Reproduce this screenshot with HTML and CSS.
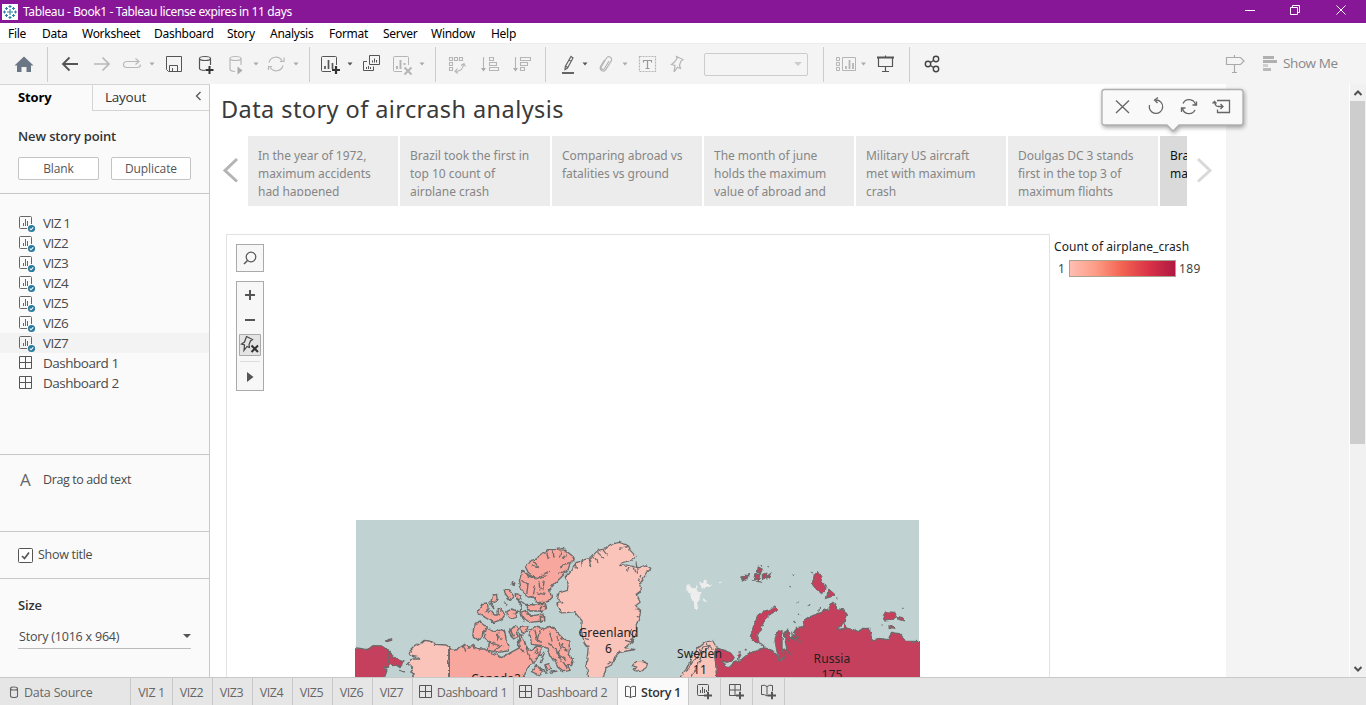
FILE: index.html
```html
<!DOCTYPE html>
<html lang="en">
<head>
<meta charset="utf-8">
<title>Tableau - Book1</title>
<link rel="stylesheet" href="styles.css">
</head>
<body>
<svg width="0" height="0" class="defs">
  <defs>
    <symbol id="sheet" viewBox="0 0 17 17"><path d="M8 12.500H1.500q-1 0-1-1V1.500q0-1 1-1H11.500q1 0 1 1V8M4.500 10V7M6.500 10V3M8.500 10V5" fill="none" stroke="#666"/><circle cx="12.500" cy="12.500" r="3.600" fill="#2b7a9e"/><path d="M10.800 12.500l1.200 1.300 2.300-2.500" fill="none" stroke="#fff" stroke-width="1.100"/></symbol>
    <symbol id="dash" viewBox="0 0 14 14"><path d="M.5.5h12v12H.5zM6.500.500v12M.5 6.500h12" fill="none" stroke="#555"/></symbol>
    <symbol id="book" viewBox="0 0 12 14"><path d="M5.500 2.500v10M.5 1.500q3-1 5 1 2-2 5-1v10q-3-.5-5 1-2-1.500-5-1z" fill="none" stroke="#555"/></symbol>
    <symbol id="plus" viewBox="0 0 8 8"><path d="M4 0v8M0 4h8" stroke="#555" stroke-width="2"/></symbol>
  </defs>
</svg>
<div class="app">
  <header class="titlebar">
    <svg class="logo" width="16" height="16" viewBox="0 0 16 16"><path fill="#fff" d="M0 0h16v16H0z"/><path d="M8 5v6M5 8h6M8 1v3M6.500 2.500h3M8 12v3M6.500 13.500h3M1 8h3M2.500 6.500v3M12 8h3M13.500 6.500v3M4.500 3v3M3 4.500h3M11.500 3v3M10 4.500h3M4.500 10v3M3 11.500h3M11.500 10v3M10 11.500h3" stroke="#2f7fa8" stroke-width="1.100"/></svg>
    <span class="apptitle">Tableau - Book1 - Tableau license expires in 11 days</span>
    <svg width="126" height="23" viewBox="1240 0 126 23" fill="none" stroke="#fff"><path d="M1245 10.500h10M1290.500 7.500h7v7h-7zM1292.500 7.500v-2h7v7h-2M1336.500 5.500l9 9M1345.500 5.500l-9 9"/></svg>
  </header>
  <nav class="menu">
    <span class="m34">File</span><span class="m40">Data</span><span class="m72">Worksheet</span><span class="m73">Dashboard</span><span class="m43">Story</span><span class="m59">Analysis</span><span class="m54">Format</span><span class="m48">Server</span><span class="m60">Window</span><span>Help</span>
  </nav>
  <div class="toolbar">
    <svg width="48" height="40" viewBox="0 44 48 40"><path d="M14.500 65.500L24 56.500l9.500 9H31V72h-4.500v-5h-5v5H17v-6.500z" fill="#6b7684"/><path d="M47.500 47v35" stroke="#ccc"/></svg>
    <svg width="262" height="40" viewBox="48 44 262 40" fill="none" stroke="#b8b8b8" stroke-width="1.200">
      <path d="M63 64h15M69.500 57.500L63 64l6.500 6.500" stroke="#555" stroke-width="1.900"/>
      <path d="M94 64h15M102.500 57.500L109 64l-6.500 6.500" stroke-width="1.700"/>
      <path d="M132 67.500h-5q-3.500 0-3.500-3t3.500-3h11M132 67.500h5q3.500 0 3.500-3M135.500 58.500l3.500 3-3.500 3"/>
      <path d="M149.500 62.500h5l-2.500 3zM253.500 62.500h5l-2.500 3zM293.500 62.500h5l-2.500 3z" fill="#aaa" stroke="none"/>
      <path d="M166.500 56.500h15v15h-13l-2-2zM169.500 71.500v-6h8v6M172.500 71v-3" stroke="#555" stroke-width="1"/>
      <path d="M205 70.500q-5.500-.3-5.500-2v-10q0-2 5.500-2t5.500 2v6.500M199.500 58.500q0 2 5.500 2t5.500-2" stroke="#555"/><path d="M209.500 66v8M205.500 70h8" stroke="#333" stroke-width="2"/>
      <path d="M235 71.500q-5-.3-5-2.500V58.500q0-2 5.500-2t5.500 2V65M230 58.500q0 2 5.500 2t5.500-2"/><path d="M237.500 66.500l5 4-5 4z" fill="#aaa" stroke="none"/>
      <path d="M269 62.500a7 7 0 0 1 13-1.500M283 65.500a7 7 0 0 1-13 1.500M280 61.500h4v-4M272 66.500h-3.500v3.500"/>
      <path d="M309.500 47v35" stroke="#ccc" stroke-width="1"/>
    </svg>
    <svg width="126" height="40" viewBox="310 44 126 40" fill="none" stroke="#555" stroke-width="1">
      <path d="M331 71.500h-8.500q-1 0-1-1v-13q0-1 1-1h13q1 0 1 1V65"/><path d="M325 69v-3M328.500 69v-9M332.500 69v-6" stroke-width="1.700"/><path d="M336 66v8M332 70h8" stroke="#333" stroke-width="2.200"/>
      <path d="M347.500 62.500h5l-2.500 3z" fill="#555" stroke="none"/>
      <path d="M369.500 55.500h10v9h-10zM367 61.500h-3.500v9h10v-4M372.500 62.500v-2M374.500 62.500v-4M376.500 62.500v-2.500M366.500 69v-2M368.500 69v-3M370.500 69v-2"/>
      <g stroke="#b5b5b5"><path d="M402 71.500h-7.500q-1 0-1-1v-13q0-1 1-1h13q1 0 1 1V65"/><path d="M397 69v-3M400.500 69v-9M404.500 65v-2M404.500 67.500l7 7M411.500 67.500l-7 7" stroke-width="2"/></g>
      <path d="M419.500 62.500h5l-2.500 3z" fill="#aaa" stroke="none"/><path d="M435.500 47v35" stroke="#ccc"/>
    </svg>
    <svg width="110" height="40" viewBox="436 44 110 40" fill="none" stroke="#b5b5b5" stroke-width="1.100">
      <path d="M449.500 57.500h3v3h-3zM454.500 57.500h3v3h-3zM459.500 57.500h3v3h-3zM449.500 62.500h3v3h-3zM449.500 67.500h3v3h-3zM456 71.500q7-1 7.500-7M461 65.500l3-2 1.500 3M457.500 68.500l-2.500 3 3 2"/>
      <path d="M483.500 57v12M489.500 57.500h4v3h-4zM489.500 62.500h7v3h-7zM489.500 67.500h9v3h-9z"/><path d="M481 68h5l-2.500 3.500zM513 68h5l-2.500 3.500z" fill="#aaa" stroke="none"/>
      <path d="M515.500 57v12M520.500 57.500h10v3h-10zM520.500 62.500h7v3h-7zM520.500 67.500h4v3h-4z"/>
      <path d="M545.500 47v35" stroke="#ccc" stroke-width="1"/>
    </svg>
    <svg width="158" height="40" viewBox="546 44 158 40" fill="none" stroke="#b5b5b5" stroke-width="1.200">
      <path d="M571 56.500l2 1.500-5.500 10-2.500 1.500.3-3zM565.500 66l2.500 1.700M569 60l2.500 1.500" stroke="#666"/><path d="M562 73h12" stroke="#555" stroke-width="1.800"/>
      <path d="M582.500 62.500h5l-2.500 3z" fill="#555" stroke="none"/><path d="M622.500 62.500h5l-2.500 3z" fill="#aaa" stroke="none"/>
      <path d="M609 61l-4.500 7.500q-1 1.500-2.500.5t-.5-2.500l5-8.500q1.500-2 3.500-1t1.500 3.500l-6 9.500q-2 2-4 .5t-1-4l4-6.500"/>
      <path d="M639.500 56.500h16v15h-16z" stroke-dasharray="2 1"/><path d="M643.500 62.500v-2h8v2M647.500 60.500v8M645.500 68.500h4" stroke="#999"/>
      <path d="M676.500 56.500l6.500 3-2 1.500-1.500 4 1 3.500-3-1.200-3.500 4.700 1-6.500-3.500-1 3-2.500 2.500-3.500z"/>
    </svg>
    <div class="combo"><i class="caret light"></i></div>
    <svg width="142" height="40" viewBox="808 44 142 40" fill="none" stroke="#b5b5b5" stroke-width="1">
      <path d="M823.500 47v35M909.500 47v35" stroke="#ccc"/>
      <path d="M836.500 57.500h3v3h-3zM836.500 62.500h3v3h-3zM836.500 67.500h3v3h-3zM842.500 57.500h13v13h-13z"/><path d="M846 69v-3M849.500 69v-9M853 69v-6" stroke-width="1.800"/><path d="M861 62.500h5l-2.500 3z" fill="#aaa" stroke="none"/>
      <path d="M877 57.500h17" stroke="#555" stroke-width="2"/><path d="M878.500 58v8.500h14V58M885.500 55.500v2M885.500 66.500v5M882 71.500h7" stroke="#555" stroke-width="1.200"/>
      <g stroke="#444" stroke-width="1.400"><circle cx="928" cy="64" r="2.700"/><circle cx="936" cy="59" r="2.700"/><circle cx="936" cy="69" r="2.700"/><path d="M930.500 62.500l3-2M930.500 65.500l3 2"/></g>
    </svg>
    <svg class="push" width="62" height="40" viewBox="1221 44 62 40"><path d="M1226.500 57.500h14l3.500 3.500-3.500 3.500h-14zM1234.500 55v2.500M1234.500 64.500v8M1232 72.500h5" fill="none" stroke="#aaa" stroke-width="1.200"/><path d="M1263 56h11v3h-11zM1263 60h14v3h-14z" fill="#b0b0b0"/><path d="M1263 64h5v3h-5z" fill="#d0d0d0"/><path d="M1263 68h8v3h-8z" fill="#b9b9b9"/></svg>
    <span class="showme">Show Me</span>
  </div>

  <main class="body">
    <aside class="side">
      <div class="sidetabs"><b>Story</b><div class="laytab"><span>Layout</span><svg width="8" height="12" viewBox="0 0 8 12"><path d="M5.500 1L1.500 5 5.500 9" fill="none" stroke="#555" stroke-width="1.300"/></svg></div></div>
      <section class="newpt"><h3>New story point</h3><div class="btns"><button>Blank</button><button>Duplicate</button></div></section>
      <section class="list">
        <div class="row"><svg width="17" height="17"><use href="#sheet"/></svg><span>VIZ 1</span></div>
        <div class="row"><svg width="17" height="17"><use href="#sheet"/></svg><span>VIZ2</span></div>
        <div class="row"><svg width="17" height="17"><use href="#sheet"/></svg><span>VIZ3</span></div>
        <div class="row"><svg width="17" height="17"><use href="#sheet"/></svg><span>VIZ4</span></div>
        <div class="row"><svg width="17" height="17"><use href="#sheet"/></svg><span>VIZ5</span></div>
        <div class="row"><svg width="17" height="17"><use href="#sheet"/></svg><span>VIZ6</span></div>
        <div class="row hot"><svg width="17" height="17"><use href="#sheet"/></svg><span>VIZ7</span></div>
        <div class="row dashrow"><svg width="14" height="14"><use href="#dash"/></svg><span>Dashboard 1</span></div>
        <div class="row dashrow"><svg width="14" height="14"><use href="#dash"/></svg><span>Dashboard 2</span></div>
      </section>
      <section class="drag"><span class="bigA">A</span><span>Drag to add text</span></section>
      <section class="show"><svg width="15" height="15" viewBox="0 0 15 15"><rect x=".5" y=".5" width="14" height="14" rx="1" fill="#fff" stroke="#555"/><path d="M4 8l2.500 2.500L11 4.500" fill="none" stroke="#555" stroke-width="1.700"/></svg><span>Show title</span></section>
      <section class="size"><h3>Size</h3><div class="sel"><span>Story (1016 x 964)</span><i class="caret"></i></div></section>
    </aside>

    <div class="story">
      <h1>Data story of aircrash analysis</h1>
      <div class="nav">
        <svg width="38" height="70" viewBox="210 136 38 70"><path d="M237 159L225 170.500l12 11" fill="none" stroke="#b4b4b4" stroke-width="3"/></svg>
        <div class="points">
          <div class="pt"><p>In the year of 1972,<br>maximum accidents<br>had happened</p></div>
          <div class="pt"><p>Brazil took the first in<br>top 10 count of<br>airplane crash</p></div>
          <div class="pt"><p>Comparing abroad vs<br>fatalities vs ground</p></div>
          <div class="pt"><p>The month of june<br>holds the maximum<br>value of abroad and</p></div>
          <div class="pt"><p>Military US aircraft<br>met with maximum<br>crash</p></div>
          <div class="pt"><p>Doulgas DC 3 stands<br>first in the top 3 of<br>maximum flights</p></div>
          <div class="pt on"><p>Bra<br>ma</p></div>
        </div>
        <svg width="39" height="70" viewBox="1187 136 39 70"><path d="M1198 159l12 11.500-12 11" fill="none" stroke="#d9d9d9" stroke-width="3"/></svg>
      </div>
      <div class="content">
        <div class="viz">
          <div class="ctl one"><svg width="26" height="26" viewBox="0 0 26 26"><circle cx="14" cy="12" r="4.800" fill="none" stroke="#555" stroke-width="1.200"/><path d="M10.500 15.500l-3.500 3.500" stroke="#555" stroke-width="1.500"/></svg></div>
          <div class="ctl many">
            <svg width="26" height="108" viewBox="237 282 26 108"><path d="M245 295h10M250 290v10M245 320h10" stroke="#555" stroke-width="2"/><path d="M239.500 334.500h21v21h-21z" fill="#e4e4e4" stroke="#aaa"/><path d="M246.500 336.500l6 3-2 1.500-1.500 3.500.5 3-2.500-1-3 4 .5-5.500-3-1 3-2z" fill="none" stroke="#444" stroke-width="1.200"/><path d="M251.500 345.500l6.500 6.500M258 345.500l-6.500 6.500" stroke="#333" stroke-width="2"/><path d="M240 361.500h20" stroke="#ddd"/><path d="M247 372l6.500 5-6.500 5z" fill="#555"/></svg>
          </div>
          <svg class="map" width="566" height="157" viewBox="355 520 566 157">
            <defs><filter id="coast" x="-5%" y="-5%" width="110%" height="110%"><feTurbulence type="fractalNoise" baseFrequency=".22" numOctaves="2" seed="4"/><feDisplacementMap in="SourceGraphic" scale="3.500" xChannelSelector="R" yChannelSelector="G"/></filter></defs>
            <path d="M356 520h563v157H356z" fill="#c1d2d2"/>
            <g filter="url(#coast)">
            <g transform="translate(349.500 515) scale(.33333)" stroke="#6b6b6b" stroke-width="4" stroke-linejoin="round">
              <g fill="#c43f5b"><path d="M0 376L20 398 52 404 60 400 70 392 100 393 117 405 117 456 104 458 112 468 100 500H0z"/><path d="M117 408L132 422 140 432 160 440 152 458 140 450 130 452 117 446zM108 378L118 370 127 375 112 380zM152 466l14 5"/></g>
              <path fill="#fac4ba" d="M298 396L290 390 258 388 240 378 224 376 212 386 196 394 178 412 182 420 206 425 208 432 190 432 174 446 190 460 184 468 194 480 180 500H298z"/>
              <g fill="#f8a79e">
                <path d="M298 396L306 404 315 406 334 396 346 388 356 400 372 388 378 398 392 402 406 402 416 410 440 418 456 428 470 420 500 404 510 398 512 390 506 374 516 360 524 376 530 398 548 408 560 392 574 396 576 420 560 430 552 446 540 452 528 470 516 500H298z"/>
                <path d="M374 325L394 321 414 336 400 350 398 368 386 376 370 362zM404 352L420 340 438 350 456 344 466 350 470 376 478 392 476 408 446 412 416 406 420 380 406 368z"/>
                <path d="M384 292L398 266 414 264 416 280 408 290 424 288 434 300 446 300 446 280 454 280 466 300 456 314 432 322 408 308zM430 240L444 238 446 252 436 262 424 260zM464 224L478 222 494 246 480 256 468 240zM500 236L514 240 514 254 502 252zM472 290L486 282 500 286 502 306 488 312 474 302zM488 200l8 4-2 8-6-4zM464 260l6 10"/>
                <path d="M512 292L530 286 544 304 580 296 586 306 580 318 540 322 526 312zM528 268L560 270 586 262 592 280 578 288 540 288zM478 350L496 332 510 340 500 350 506 364 492 372zM512 334L536 332 530 350 518 356z"/>
                <path d="M528 156L546 136 562 132 570 120 586 112 594 104 618 104 640 100 668 122 674 134 662 146 654 168 632 190 612 210 600 224 606 246 592 262 566 262 550 244 534 248 514 220 510 196 518 166 534 182 560 192 536 172z"/>
                <path d="M572 276L584 270 590 284 576 290zM572 304L584 302 586 314 574 322z"/>
                <path d="M540 348L556 335 584 342 600 334 614 338 622 352 640 370 658 378 660 402 656 422 672 434 666 452 654 450 662 466 640 470 624 456 616 434 600 422 596 400 580 392 546 388z"/>
                <path d="M546 470L560 450 580 470 568 480zM586 450L598 446 606 460 592 468zM556 410l14 12-10 10"/>
              </g>
              <path fill="none" d="M530 174L546 186 564 190 578 184 596 182M592 112l4 20M610 106l4 22M636 104l-6 24M652 116l-12 16M546 152l18 6M554 140l14 18M568 200l4 26M584 196l-4 30M516 196l18 14M536 204l-4 30M556 214l-4 24M660 142l-28 14M648 168l-22 8M600 168l-24 12M564 234l24 4M502 250l14 20-4 20-20 6M516 300l8 20M500 284l14 12M530 296l20 6M508 350l6 30M526 380l10 40 20 30M440 360l20 14M424 384l26 8M448 350l-4 24M458 392l-22 12M340 392l10 16M370 392l6 12M556 344l6 26M572 346l-10 30 18 6M600 350l8 30M622 366l12 30 20 10M596 384l24 20 16 36M640 384l-12 34M562 400l12 26M586 410l-14 34M570 456l24 20M600 472l24-4M420 262l14 20M506 256l20 10M480 340l12 24M514 366l-10 24 20 24M628 420l28 18M640 440l14 20"/>
            </g>
            <g transform="translate(539.500 515) scale(.33333)" stroke="#6b6b6b" stroke-width="3.600" stroke-linejoin="round">
              <path fill="#fac4ba" d="M77 186L100 160 110 142 135 134 152 130 160 122 175 106 194 102 214 88 240 82 258 88 268 94 272 106 290 124 280 134 245 144 238 152 262 150 286 156 300 158 318 150 334 160 318 180 300 208 306 226 290 238 302 262 288 272 304 286 300 306 290 330 292 352 272 384 256 398 286 404 240 412 226 426 216 450 200 458 188 500H150L140 452 146 400 134 382 126 350 128 318 104 290 86 292 66 294 52 264 70 264 54 250 58 234 84 226 86 206zM278 452L290 440 310 440 324 446 320 458 300 470 284 466 292 456zM412 500L440 462 455 430 475 400 500 380 520 378 530 396 525 420 528 440 536 500z"/>
              <path fill="none" d="M107 146l4 14M126 138l2 18M148 130l6 26M162 122l14 22M174 112l20 18M190 104l14 18M238 100l30-6M268 158l-4 12M280 152l6 22M290 142l4 34M304 180l-8 20M290 240l14-10M288 282l16 8M292 306l10-6M268 350l16 16-8 20M256 376l24 6M276 342l-6 14M136 370l12 4M136 392l14 2M216 440l-12 8M440 470l20-30 20-20 10-24 24-6M456 430l-4 20M480 402l4 14M500 384l6 20M510 392l-22 24-12 32-26 52M508 392l14 12"/>
              <path fill="#eee" stroke="none" d="M441 210l10-2 4 10 14 2 2-12 4 22 12 2-8 12 2 12-8 12-2 14-6 0-2-24-8-8-2-10-12-8zM478 204l12 0 4-10 8 2-2 10 14 2-4 8-12 2-10 8-2-12zM488 246l10 6 4 12-12-8zM540 198h6v4h-6z"/>
            </g>
            <g transform="translate(729.500 515) scale(.33333)" stroke="#6b6b6b" stroke-width="3.600" stroke-linejoin="round" fill="#c43f5b">
              <path d="M-38 500L-42 440-44 410-36 400-20 404 4 414 14 428 8 438-8 442-22 438-14 452 4 456 16 440 36 434 56 416 80 408 104 398 128 406 142 420 150 438 164 432 162 406 172 404 168 382 164 352 176 346 180 370 196 360 206 380 194 350 200 338 226 334 220 322 240 306 272 292 296 282 306 262 318 266 322 280 344 286 354 300 344 322 320 346 348 338 366 342 388 350 400 340 420 340 428 376 444 370 476 374 486 352 510 356 530 378 590 380V500z"/>
              <path stroke-width="3" d="M136 376L146 344 158 346 158 400 164 430 150 434 142 410zM74 380L62 366 70 338 84 304 104 288 128 282 138 274 146 284 120 300 106 314 94 342 84 362 90 386zM248 206L254 180 266 168 278 186 274 202 290 210 288 228 276 236 262 224 252 214zM290 250L298 222 316 238 304 246zM460 304L468 290 496 292 502 304 488 316 466 318zM504 304L520 308 526 318 508 314zM478 338L486 330 494 340z"/>
              <path d="M34 186l16-6-4 14-8 4zM48 186l12-8-4 12-8 6zM76 176l16 4-6 14-12-4zM86 156l12 6-6 16-8-8zM98 182l14-8-2 12-10 6zM112 184l14-10-4 12-10 6zM64 196l12-4M82 198l16 4M94 150l4 4M114 154l4 2M192 178h4M180 214l4 2M244 170l6 4M320 248l4 2M204 264h4M238 272l4-4M206 296l2 6M192 318l6 6M270 276l-2 14M456 330h4M518 280h4M28 412l6 8-8 14M46 402l6 4M92 384l12 10M174 344l-8 20 12 14M186 350l4 24M204 342l8 40M170 404l14 16M346 324l6 12-14 8M176 366l20 10"/>
            </g>
            </g>
            <path d="M449.500 648v30" stroke="#6b6b6b"/>
            <path d="M355 520h1v121h-1zM919 520h2v121h-2zM920 641h1v36h-1z" fill="#fff"/>
            <g class="maplabels" text-anchor="middle"><text x="608.500" y="637">Greenland</text><text x="608.500" y="653">6</text><text x="699.500" y="658">Sweden</text><text x="700" y="673.500">11</text><text x="832" y="663">Russia</text><text x="832" y="679">175</text><text x="496" y="682.500">Canada2</text></g>
          </svg>
        </div>
        <div class="legend"><p>Count of airplane_crash</p><div class="scale"><span>1</span><i></i><span>189</span></div></div>
      </div>
      <div class="tip">
        <svg width="150" height="52" viewBox="1098 85 150 52"><path class="bubble" d="M1104.500 89.500h136q2.500 0 2.500 2.500v30.500q0 2.500-2.500 2.500h-61.500l-6 6-6-6h-62.500q-2.500 0-2.500-2.500V92q0-2.500 2.500-2.500z" fill="#f9f9f9" stroke="#b0b0b0" stroke-width="1.300"/>
        <g fill="none" stroke="#666" stroke-width="1.300"><path d="M1116 100.500l13 12.500M1129 100.500l-13 12.500M1149.500 105a6.700 6.700 0 1 0 6.500-5M1158 97.500l-3.500 2.500 3 3M1183 103.500a6.700 6.700 0 0 1 12.500 1M1195 110a6.700 6.700 0 0 1-12.500-1.500M1196.500 101.500v3.500h-4M1181.500 112v-4h4"/><path d="M1217 100.500h12.500v12h-12v-3M1214.500 101.500q.5 5 4 5h4M1220.500 104l2.500 2.500-2.500 2.500M1212.500 103.500l2-2 2 2"/></g></svg>
      </div>
    </div>
    <div class="void"></div>
    <div class="scroll"><svg width="16" height="17" viewBox="0 0 16 17"><path d="M4.500 11L8 7.500l3.500 3.500" fill="none" stroke="#505050" stroke-width="2"/></svg><div class="thumb"></div><svg class="down" width="16" height="17" viewBox="0 0 16 17"><path d="M4.500 7L8 10.500 11.500 7" fill="none" stroke="#505050" stroke-width="2"/></svg></div>
  </main>

  <footer class="tabs">
    <div class="tab ds"><svg width="10" height="13" viewBox="0 0 10 13"><path d="M1.500 2.500v7.500q0 1.500 3.500 1.500T8.500 10V2.500Q8.500 1 5 1T1.500 2.500 5 4 8.500 2.500" fill="none" stroke="#666" stroke-width="1.100"/></svg><span>Data Source</span></div>
    <div class="tab w42">VIZ 1</div><div class="tab w40">VIZ2</div><div class="tab w40">VIZ3</div><div class="tab w40">VIZ4</div><div class="tab w40">VIZ5</div><div class="tab w40">VIZ6</div><div class="tab w40">VIZ7</div>
    <div class="tab w101"><svg width="14" height="14"><use href="#dash"/></svg><span>Dashboard 1</span></div>
    <div class="tab w104"><svg width="14" height="14"><use href="#dash"/></svg><span>Dashboard 2</span></div>
    <div class="tab active"><svg width="12" height="14"><use href="#book"/></svg><span>Story 1</span></div>
    <div class="tab w32"><svg width="18" height="18" viewBox="0 0 18 18"><path d="M8 12.500H2.500q-1 0-1-1v-9q0-1 1-1h9q1 0 1 1V8M4.500 10V7M6.500 10V4M8.500 10V6M10.500 9V7" fill="none" stroke="#555"/><use href="#plus" x="8" y="8.500" width="8" height="8"/></svg></div>
    <div class="tab w32"><svg width="18" height="18" viewBox="0 0 18 18"><path d="M8.500 12.500h-7v-11h11v6M7 1.500v11M1.500 7h11" fill="none" stroke="#555"/><use href="#plus" x="8" y="8.500" width="8" height="8"/></svg></div>
    <div class="tab w32"><svg width="18" height="18" viewBox="0 0 18 18"><path d="M7 3.500V13M8 12.500l-1 .5q-2.500-2-5.500-1.500v-9q3-1 5.500 1 2.500-2 5.500-1V8" fill="none" stroke="#555"/><use href="#plus" x="8" y="8.500" width="8" height="8"/></svg></div>
  </footer>
</div>
</body>
</html>
```
FILE: styles.css
```css
* { box-sizing: border-box; margin: 0; padding: 0; }
body { overflow: hidden; font-family: "Open Sans", "Noto Sans", sans-serif; font-size: 13px; color: #4a4a4a; background: #fff; }
svg { display: block; flex: none; }
.defs { position: absolute; }
.app { width: 1366px; height: 705px; display: flex; flex-direction: column; overflow: hidden; white-space: nowrap; }
.titlebar { height: 23px; flex: none; background: #881798; color: #fff; display: flex; align-items: center; padding-left: 2px; font-size: 12px; font-family: "Noto Sans", sans-serif; }
.apptitle { margin-left: 5px; flex: 1; letter-spacing: -.38px; }
.menu { height: 20px; flex: none; display: flex; align-items: center; padding-left: 8px; color: #000; font-size: 12px; font-family: "Noto Sans", sans-serif; letter-spacing: -.28px; padding-top: 1px; }
.m34 { width: 34px; } .m40 { width: 40px; } .m72 { width: 72px; } .m73 { width: 73px; } .m43 { width: 43px; }
.m59 { width: 59px; } .m54 { width: 54px; } .m48 { width: 48px; } .m60 { width: 60px; }
.toolbar { height: 41px; flex: none; background: #f4f4f4; display: flex; align-items: center; border-top: 1px solid #ececec; padding-right: 29px; }
.combo { width: 104px; height: 23px; border: 1px solid #ccc; border-radius: 2px; display: flex; align-items: center; justify-content: flex-end; padding-right: 5px; }
.caret { width: 0; height: 0; border: 4px solid transparent; border-top-color: #555; border-bottom: 0; }
.caret.light { border-top-color: #ccc; }
.push { margin-left: auto; }
.showme { font-size: 13.500px; color: #888; letter-spacing: -.4px; width: 54px; margin-top: -2px; }
.body { flex: 1; display: flex; min-height: 0; }
.side { width: 210px; flex: none; background: #fafafa; border-right: 1px solid #c8c8c8; border-top: 1px solid #d4d4d4; }
.sidetabs { height: 26px; display: flex; }
.sidetabs b { width: 92px; padding: 3px 0 0 18px; color: #000; font-size: 13px; font-weight: 700; letter-spacing: -.1px; }
.laytab { flex: 1; border-left: 1px solid #d4d4d4; border-bottom: 1px solid #d4d4d4; display: flex; align-items: center; justify-content: space-between; padding: 0 6px 1px 12px; font-size: 13.500px; letter-spacing: -.25px; color: #333; }
h3 { font-size: 13px; font-weight: 600; color: #333; line-height: 18px; letter-spacing: -.13px; }
.newpt { height: 83px; border-bottom: 1px solid #c8c8c8; padding: 16px 18px 0; }
.btns { display: flex; gap: 12px; margin-top: 12px; }
button { height: 23px; width: 81px; border: 1px solid #c4c4c4; border-radius: 2px; background: #fff; font: 12px "Open Sans", sans-serif; letter-spacing: -.1px; color: #555; padding-bottom: 1px; }
button + button { width: 80px; }
.list { height: 261px; border-bottom: 1px solid #c8c8c8; padding-top: 19px; }
.row { height: 20px; display: flex; align-items: center; padding-left: 19px; gap: 7px; font-size: 13.500px; letter-spacing: -.48px; }
.row:first-child { word-spacing: -1px; }
.row > svg { margin-top: 3px; }
.dashrow { gap: 10px; } .dashrow > svg { margin-top: 0; }
.hot { background: #f3f3f3; }
.drag { height: 77px; border-bottom: 1px solid #c8c8c8; display: flex; padding: 15px 0 0 20px; line-height: 20px; gap: 12px; font-size: 12.500px; letter-spacing: -.4px; }
.bigA { font-size: 17px; width: 11px; color: #666; }
.show { height: 47px; border-bottom: 1px solid #c8c8c8; display: flex; align-items: center; gap: 5px; padding-left: 18px; font-size: 12.500px; letter-spacing: -.3px; }
.show span { margin-top: -2px; }
.size { padding: 17px 18px 0; }
.sel { height: 25px; margin-top: 10px; border-bottom: 1px solid #bbb; display: flex; align-items: center; justify-content: space-between; padding-left: 1px; font-size: 12.500px; letter-spacing: -.2px; }
.story { width: 1016px; flex: none; position: relative; display: flex; flex-direction: column; overflow: visible; font-family: "Noto Sans", sans-serif; }
h1 { height: 52px; padding: 8px 0 0 11px; font-size: 23.500px; line-height: 34px; font-weight: 400; letter-spacing: .42px; color: #3a3a3a; }
.nav { display: flex; height: 70px; flex: none; }
.points { display: flex; gap: 2px; width: 939px; overflow: hidden; }
.pt { width: 150px; flex: none; background: #ececec; padding: 11px 0 0 10px; color: #868686; font-size: 12px; line-height: 18px; letter-spacing: -.04px; }
.pt p { height: 49px; overflow: hidden; }
.on { background: #dadada; color: #111; }
.content { margin: 28px 0 0 16px; display: flex; flex: 1; min-height: 0; }
.viz { width: 824px; border: 1px solid #e2e2e2; border-bottom: 0; padding: 9px 0 0 9px; display: flex; flex-direction: column; overflow: hidden; }
.ctl { width: 28px; border: 1px solid #aaa; background: #f7f7f7; flex: none; }
.one { height: 28px; } .many { height: 110px; margin-top: 9px; }
.map { margin: 129px 0 0 119px; }
.maplabels { font-family: "Noto Sans", sans-serif; font-size: 12px; letter-spacing: .1px; fill: #222; }
.legend { padding: 5px 0 0 4px; font-size: 12px; color: #444; }
.legend p { line-height: 16px; color: #222; letter-spacing: .07px; }
.scale { display: flex; align-items: center; padding-left: 4px; margin-top: 5px; height: 17px; letter-spacing: .4px; }
.scale i { width: 107px; height: 17px; border: 1px solid #a9a28f; background: linear-gradient(90deg, #ffbeb2, #fd9b85 25%, #f26250 50%, #d93348 75%, #b01842); margin: 0 3px 0 4px; }
.scale span:first-child { letter-spacing: 0; }
.tip { position: absolute; left: 888px; top: 1px; z-index: 2; }
.bubble { filter: drop-shadow(1px 2px 2px rgba(0,0,0,.35)); }
.void { flex: 1; background: #f4f4f4; border-right: 1px solid #fff; }
.scroll { width: 16px; background: #f1f1f1; display: flex; flex-direction: column; }
.thumb { height: 343px; width: 15px; background: #cdcdcd; }
.down { margin-top: auto; }
.tabs { height: 28px; flex: none; background: #e6e6e6; border-top: 1px solid #c8c8c8; display: flex; font-size: 12.500px; color: #666; }
.tab { border-right: 1px solid #c8c8c8; display: flex; align-items: center; justify-content: center; padding-top: 2px; flex: none; gap: 4px; letter-spacing: -.42px; }
.tab svg { margin-top: -1px; }
.ds { width: 131px; justify-content: flex-start; padding-left: 9px; gap: 5px; letter-spacing: -.2px; }
.w42 { width: 42px; } .w40 { width: 40px; padding-right: 2px; } .w101 { width: 101px; } .w104 { width: 104px; padding-right: 5px; } .w32 { width: 32px; }
.active { width: 71px; background: #fafafa; color: #333; font-weight: 600; letter-spacing: -.3px; }
```
